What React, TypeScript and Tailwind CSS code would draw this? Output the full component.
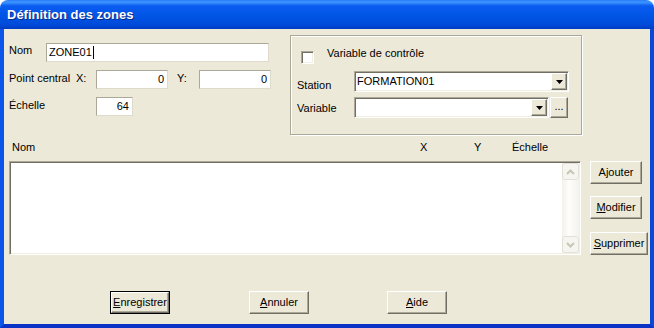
const raised =
  'bg-[#ece9d8] border border-t-white border-l-white border-b-[#716f64] border-r-[#716f64] shadow-[inset_-1px_-1px_0_#aca899]'
const sunken =
  'border border-t-[#aca899] border-l-[#aca899] border-b-white border-r-white shadow-[inset_1px_1px_0_#716f64,inset_-1px_-1px_0_#f1efe2]'
const edit = 'h-[19px] bg-white border border-t-[#aca899] border-l-[#aca899] border-b-[#dedbcd] border-r-[#dedbcd] flex items-center'

function DownArrow() {
  return (
    <svg width="7" height="4" viewBox="0 0 7 4">
      <polygon points="0,0 7,0 3.5,4" fill="#000" />
    </svg>
  )
}

function Chevron({ up }: { up?: boolean }) {
  return (
    <svg width="9" height="6" viewBox="0 0 9 6">
      <polyline
        points={up ? '1,5 4.5,1.5 8,5' : '1,1 4.5,4.5 8,1'}
        fill="none"
        stroke="#c9c6b8"
        strokeWidth="2"
      />
    </svg>
  )
}

function Combo({ width, value }: { width: string; value?: string }) {
  return (
    <div className={`flex h-[21px] ${width} bg-white ${sunken} p-px`}>
      <div className="flex-1 flex items-center pl-px leading-[13px]">{value}</div>
      <div className={`w-[16px] h-full ${raised} flex items-center justify-center`}>
        <DownArrow />
      </div>
    </div>
  )
}

function Btn({ width, children, isDefault }: { width: string; children: React.ReactNode; isDefault?: boolean }) {
  if (isDefault) {
    return (
      <div className={`${width} h-[23px] border border-black`}>
        <div className={`w-full h-full ${raised} flex items-center justify-center`}>{children}</div>
      </div>
    )
  }
  return <div className={`${width} h-[23px] ${raised} flex items-center justify-center`}>{children}</div>
}

export default function App() {
  return (
    <div className="w-[654px] h-[328px] flex flex-col rounded-t-[8px] overflow-hidden font-['Liberation_Sans',Arial,sans-serif] text-[11px] leading-[13px] text-black">
      {/* title bar */}
      <div className="h-[29px] shrink-0 flex items-center pl-[7px] bg-[linear-gradient(to_bottom,#2a7cf8_0%,#3d95ff_8%,#0a5cf0_20%,#0055e5_55%,#004ad9_85%,#003bc2_100%)]">
        <span className="text-white font-bold text-[13px] [text-shadow:1px_1px_0_#0b2a8a]">Définition des zones</span>
      </div>

      {/* client */}
      <div className="flex-1 flex flex-col bg-[#ece9d8] border-l-4 border-r-4 border-b-4 border-l-[#0b55ea] border-r-[#0a48d8] border-b-[#0a32c4]">
        {/* top section */}
        <div className="flex pl-[5px]">
          <div className="flex flex-col w-[262px]">
            <div className="mt-[14px] flex items-center h-[19px]">
              <span className="w-[37px] pb-[4px]">Nom</span>
              <div className={`${edit} w-[223px] pl-[2px]`}>
                ZONE01
                <span className="w-px h-[13px] bg-black ml-px" />
              </div>
            </div>
            <div className="mt-[8px] flex items-center h-[19px]">
              <span className="w-[67px] pb-[3px]">Point central</span>
              <span className="w-[20px] pb-[3px]">X:</span>
              <div className={`${edit} w-[72px] justify-end pr-[3px]`}>0</div>
              <span className="ml-[9px] w-[22px] pb-[3px]">Y:</span>
              <div className={`${edit} w-[72px] justify-end pr-[3px]`}>0</div>
            </div>
            <div className="mt-[8px] flex items-center h-[19px]">
              <span className="w-[87px] pb-[3px]">Échelle</span>
              <div className={`${edit} w-[37px] justify-end pr-[3px]`}>64</div>
            </div>
          </div>

          {/* group box */}
          <div className="ml-[19px] mt-[6px] w-[292px] h-[100px] border border-[#aca899] shadow-[inset_1px_1px_0_#fff,1px_1px_0_#fff] flex flex-col">
            <div className="mt-[15px] ml-[10px] h-[13px] flex items-start">
              <div className="w-[13px] h-[13px] bg-white border border-t-[#aca899] border-l-[#aca899] border-b-white border-r-white shadow-[inset_1px_1px_0_#716f64,inset_-1px_-1px_0_#f1efe2]" />
              <span className="ml-[13px] -mt-[4px]">Variable de contrôle</span>
            </div>
            <div className="mt-[7px] ml-[6px] flex items-start">
              <span className="w-[57px] mt-[8px]">Station</span>
              <Combo width="w-[215px]" value="FORMATION01" />
            </div>
            <div className="mt-[5px] ml-[6px] flex items-start">
              <span className="w-[57px] mt-[5px]">Variable</span>
              <Combo width="w-[195px]" />
              <div className={`ml-px w-[18px] h-[21px] ${raised} flex items-center justify-center pb-[3px]`}>...</div>
            </div>
          </div>
        </div>

        {/* header row */}
        <div className="mt-[4px] h-[16px] flex items-center pl-[8px]">
          <span className="w-[408px]">Nom</span>
          <span className="w-[54px]">X</span>
          <span className="w-[38px]">Y</span>
          <span>Échelle</span>
        </div>

        {/* list + side buttons */}
        <div className="mt-[6px] flex pl-[5px]">
          <div className={`w-[572px] h-[94px] bg-white ${sunken} p-px flex`}>
            <div className="flex-1" />
            <div className="w-[17px] flex flex-col justify-between bg-[linear-gradient(to_right,#f3f1ea,#fdfdfb_40%,#f4f3ee)]">
              <div className="h-[17px] rounded-[3px] border border-[#e3e1d7] bg-[#f6f5f0] flex items-center justify-center">
                <Chevron up />
              </div>
              <div className="h-[17px] rounded-[3px] border border-[#e3e1d7] bg-[#f6f5f0] flex items-center justify-center">
                <Chevron />
              </div>
            </div>
          </div>
          <div className="ml-[9px] flex flex-col">
            <Btn width="w-[52px]">Ajouter</Btn>
            <div className="mt-[12px]">
              <Btn width="w-[52px]">
                <span><u>M</u>odifier</span>
              </Btn>
            </div>
            <div className="mt-[13px]">
              <Btn width="w-[58px]">
                <span><u>S</u>upprimer</span>
              </Btn>
            </div>
          </div>
        </div>

        {/* bottom buttons */}
        <div className="mt-[36px] flex pl-[106px]">
          <Btn width="w-[60px]" isDefault>
            <span><u>E</u>nregistrer</span>
          </Btn>
          <div className="ml-[79px]">
            <Btn width="w-[60px]">
              <span><u>A</u>nnuler</span>
            </Btn>
          </div>
          <div className="ml-[78px]">
            <Btn width="w-[60px]">
              <span><u>A</u>ide</span>
            </Btn>
          </div>
        </div>
      </div>
    </div>
  )
}
